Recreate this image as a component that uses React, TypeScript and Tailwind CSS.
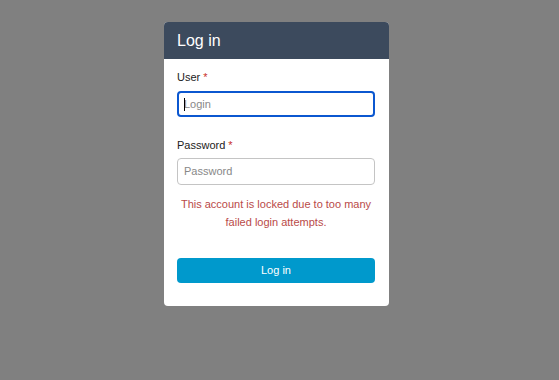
import React from "react";

export default function App() {
  return (
    <div
      className="w-[559px] h-[380px] bg-[#808080] flex justify-center pr-[6px]"
      style={{ fontFamily: '"Liberation Sans", Arial, sans-serif' }}
    >
      <div className="mt-[22px] w-[225px] h-[284px] bg-white rounded-[4px] overflow-hidden flex flex-col">
        <div className="h-[37px] bg-[#3c4a5d] flex items-center px-[13px]">
          <span className="text-white text-[16px] leading-none">Log in</span>
        </div>
        <div className="flex flex-col pl-[13px] pr-[14px] pt-[10px]">
          <label className="text-[11px] leading-[16px] text-[#222]">
            User <span className="text-[#c9302c]">*</span>
          </label>
          <div className="relative mt-[6px] h-[26px] rounded-[4px] border-2 border-[#0b57d0] flex items-center pl-[4px]">
            <span className="absolute left-[5px] top-[5px] w-[1px] h-[13px] bg-black" />
            <span className="text-[11px] text-[#888] pl-[1px]">Login</span>
          </div>
          <label className="mt-[20px] text-[11px] leading-[16px] text-[#222]">
            Password <span className="text-[#c9302c]">*</span>
          </label>
          <div className="mt-[5px] h-[27px] rounded-[4px] border border-[#c4c4c4] flex items-center pl-[6px]">
            <span className="text-[11px] text-[#888]">Password</span>
          </div>
          <p className="mt-[10px] text-center text-[11px] leading-[18px] text-[#b94a48]">
            This account is locked due to too many
            <br />
            failed login attempts.
          </p>
          <button className="mt-[27px] h-[25px] w-full rounded-[4px] bg-[#0099cc] text-white text-[11px]">
            Log in
          </button>
        </div>
      </div>
    </div>
  );
}
